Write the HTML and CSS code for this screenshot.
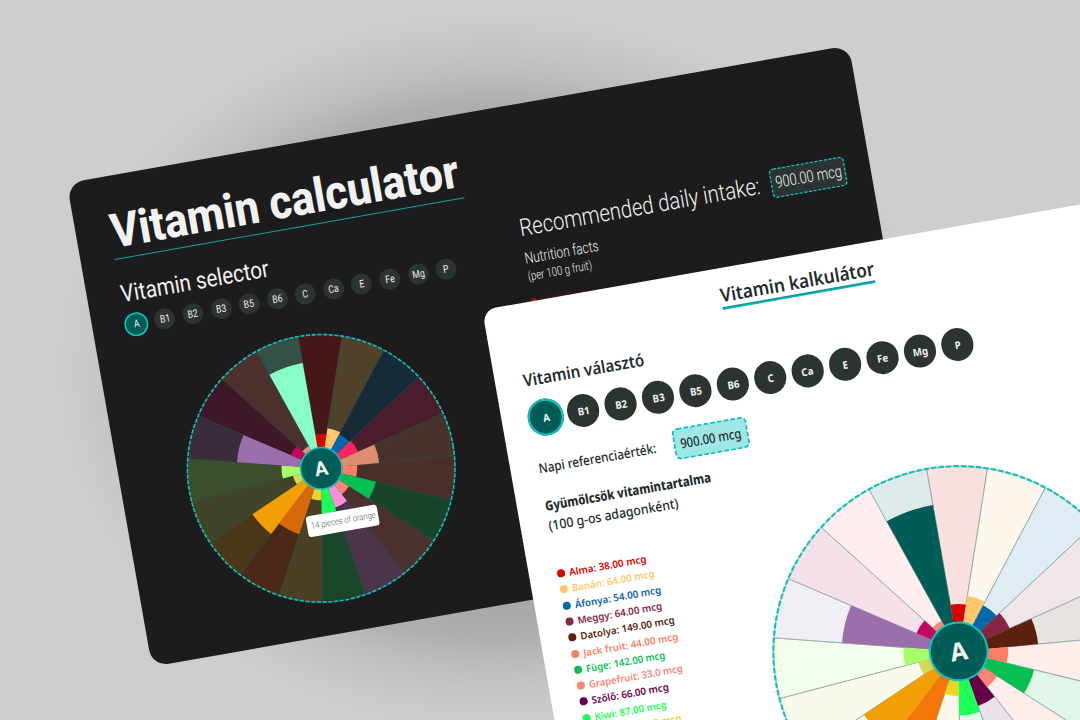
FILE: index.html
```html
<!DOCTYPE html>
<html lang="hu">
<head>
<meta charset="utf-8">
<title>Vitamin calculator</title>
<link rel="stylesheet" href="styles.css">
</head>
<body>
<div class="stage">
  <section class="window dark">
    <div class="col-main">
      <h1 class="title"><span data-width="353">Vitamin calculator</span></h1>
      <h2 class="subtitle"><span data-width="150">Vitamin selector</span></h2>
      <div class="picker"></div>
      <div class="wheel-wrap">
        <svg class="wheel" viewBox="-136 -136 272 272" data-theme="dark"></svg>
        <div class="tooltip"><span data-width="65">14 pieces of orange</span></div>
      </div>
    </div>
    <div class="col-facts">
      <div class="intake">
        <span class="intake-label"><span data-width="244">Recommended daily intake:</span></span>
        <span class="pill"><svg class="pill-frame"><rect x="0.7" y="0.7" width="74.8" height="28.6" rx="4"/></svg><span class="pill-text" data-width="67">900.00 mcg</span></span>
      </div>
      <div class="facts"><span data-width="74.5">Nutrition facts</span></div>
      <div class="per"><span data-width="65">(per 100 g fruit)</span></div>
      <div class="fruit"><i></i><span data-width="46">Apple: 38.00 mcg</span></div>
    </div>
  </section>

  <section class="window light">
    <h1 class="title"><span data-width="156">Vitamin kalkulátor</span></h1>
    <h2 class="subtitle"><span data-width="123">Vitamin választó</span></h2>
    <div class="picker"></div>
    <div class="body">
      <div class="details">
        <div class="intake">
          <span class="intake-label"><span data-width="119.5">Napi referenciaérték:</span></span>
          <span class="pill"><svg class="pill-frame"><rect x="1" y="1" width="74" height="30" rx="5"/></svg><span class="pill-text" data-width="62">900.00 mcg</span></span>
        </div>
        <div class="facts"><span data-width="168.5">Gyümölcsök vitamintartalma</span></div>
        <div class="per"><span data-width="131.5">(100 g-os adagonként)</span></div>
        <ul class="list"></ul>
      </div>
      <svg class="wheel" viewBox="-188 -188 376 376" data-theme="light"></svg>
    </div>
  </section>
</div>
<script src="app.js"></script>
</body>
</html>
```
FILE: styles.css
```css
* { box-sizing: border-box; margin: 0; padding: 0; }

body {
  width: 1080px;
  height: 720px;
  overflow: hidden;
  background:
    radial-gradient(ellipse 440px 360px at 495px 370px,
      #8f8f8f 0%, #a3a3a3 60%, #afafaf 74%, #bcbcbc 82%, #c5c5c5 89%, #cbcbcb 95%, rgba(206, 206, 206, 0) 100%),
    #cecece;
}

.stage {
  position: relative;
  width: 0;
  height: 0;
  transform: rotate(-10deg);
  transform-origin: 0 0;
}

.window { position: absolute; }

h1, h2 { font-weight: inherit; }

[data-width] {
  display: inline-block;
  white-space: nowrap;
  transform-origin: 0 50%;
}

.picker { display: grid; align-items: center; justify-items: center; }
.picker span {
  display: flex;
  align-items: center;
  justify-content: center;
  border-radius: 50%;
  background: #2c3431;
  color: #f2f2f2;
}
.picker .active { background: #005c56; }

.pill { position: relative; flex: none; display: flex; align-items: center; }
.pill-frame { position: absolute; left: 0; top: 0; width: 100%; height: 100%; stroke: #10c2bd; }
.pill-text { position: relative; }
.wheel { display: block; flex: none; }
.hub-label { text-anchor: middle; fill: #f2f2f2; font-weight: 700; }
.intake { display: flex; align-items: center; }
.intake-label { flex: none; }

/* dark window */
.dark {
  left: 34px;
  top: 192px;
  width: 794px;
  height: 490.5px;
  border-radius: 17px;
  background: #1c1c1c;
  color: #f2f2f2;
  font-family: Roboto, sans-serif;
  display: flex;
  padding: 32.3px 0 0 30px;
}
.dark .col-main { width: 408px; }
.dark .title {
  width: 355px;
  height: 52px;
  margin-left: 4.1px;
  background: linear-gradient(#0fa5a1, #0fa5a1) 0 100% / 100% 1.7px no-repeat;
  font-size: 47.5px;
  line-height: 48px;
  font-weight: 800;
}
.dark .title span { padding-left: 1px; }
.dark .title span, .dark .subtitle span { vertical-align: top; }
.dark .subtitle {
  margin: 22.3px 0 0 4.4px;
  font-size: 24px;
  line-height: 24px;
  height: 24px;
  font-weight: 400;
}
.dark .picker {
  width: 343px;
  height: 24px;
  margin-top: 8.4px;
  grid-template-columns: repeat(12, 28.58px);
}
.dark .picker span { width: 21px; height: 21px; font-size: 10.5px; }
.dark .picker b { font-weight: 400; transform: scaleX(0.82); }
.dark .picker .active { width: 24px; height: 24px; box-shadow: inset 0 0 0 1.5px #10c2bd; }
.dark .wheel-wrap { position: relative; width: 272px; margin: 26.1px 0 0 35.4px; }
.dark .wheel { width: 272px; height: 272px; }
.dark .hub-label { font-size: 20px; }
.tooltip {
  position: absolute;
  left: 112px;
  top: 181.3px;
  width: 71.5px;
  height: 20.5px;
  padding-left: 3.5px;
  border-radius: 3px;
  background: #fff;
  color: #555;
  font-size: 9px;
  line-height: 20px;
  font-weight: 300;
}
.dark .col-facts { flex: none; width: 332px; padding-top: 75.5px; }
.dark .intake { width: 332px; height: 30px; }
.dark .intake-label { width: 255.4px; height: 24px; font-size: 24px; line-height: 24px; font-weight: 300; }
.dark .intake-label span { vertical-align: top; }
.dark .pill {
  width: 76.2px;
  height: 30px;
  padding-left: 4.6px;
  font-size: 16.5px;
  font-weight: 300;
}
.dark .pill-frame { fill: #2c3431; stroke-width: 1.4px; stroke-dasharray: 3.2 1.5; }
.dark .facts { margin-top: 8px; height: 16px; font-size: 15.5px; line-height: 16px; font-weight: 300; }
.dark .per { margin-top: 3.4px; height: 14px; font-size: 12.5px; line-height: 14px; font-weight: 300; }
.dark .fruit {
  display: flex;
  align-items: center;
  margin: 12.6px 0 0 -0.8px;
  height: 10px;
  font-size: 9px;
  line-height: 10px;
  color: #5e1714;
}
.dark .fruit i { width: 4.6px; height: 4.6px; margin-right: 3.6px; border-radius: 50%; background: #a01a08; }

/* light window */
.light {
  left: 421.2px;
  top: 389.4px;
  width: 800px;
  height: 620px;
  border-radius: 14px;
  background: #fff;
  color: #232b2b;
  font-family: "Noto Sans", sans-serif;
  padding: 16.7px 0 0 25px;
}
.light .title {
  width: 155.7px;
  height: 25.2px;
  margin-left: 211.5px;
  font-size: 19px;
  line-height: 20px;
  font-weight: 600;
  background: linear-gradient(#078b87, #10c5c2) 0 100% / 100% 2.8px no-repeat;
}
.light .title span, .light .subtitle span { vertical-align: top; }
.light .subtitle {
  margin: 25.6px 0 0 2.6px;
  height: 18px;
  font-size: 17px;
  line-height: 18px;
  font-weight: 600;
}
.light .picker {
  width: 456px;
  height: 36.4px;
  margin-top: 12.6px;
  grid-template-columns: repeat(12, 37.97px);
}
.light .picker span { width: 32.6px; height: 32.6px; font-size: 10.5px; }
.light .picker b { font-weight: 700; transform: scaleX(0.92); }
.light .picker .active { width: 36.6px; height: 36.6px; box-shadow: inset 0 0 0 2.2px #10c2bd; }
.light .body { display: flex; margin-left: 2.6px; }
.light .details { flex: none; width: 212.4px; padding-top: 15.2px; }
.light .intake { height: 32px; }
.light .intake-label { width: 136.9px; font-size: 13.5px; line-height: 16px; font-weight: 500; }
.light .pill {
  width: 76px;
  height: 32px;
  padding-left: 7px;
  font-size: 13.5px;
  font-weight: 500;
}
.light .pill-frame { fill: #9fe7e5; stroke-width: 1.9px; stroke-dasharray: 4.6 2.2; }
.light .facts { margin-top: 14px; height: 16px; font-size: 13.5px; line-height: 16px; font-weight: 800; }
.light .per { margin-top: 4px; height: 16px; font-size: 13.5px; line-height: 16px; font-weight: 500; }
.light .list { list-style: none; margin: 33px 0 0 0.6px; }
.light .list li {
  display: flex;
  align-items: center;
  height: 16.29px;
  color: var(--c);
  font-size: 10px;
  line-height: 12px;
  font-weight: 600;
}
.light .list i { width: 8px; height: 8px; margin-right: 3.8px; border-radius: 50%; background: var(--c); }
.light .wheel { width: 376px; height: 376px; margin: 96.3px 0 0 -18.3px; }
.light .hub-label { font-size: 25px; }
```
FILE: app.js
```js
const vitamins = ["A", "B1", "B2", "B3", "B5", "B6", "C", "Ca", "E", "Fe", "Mg", "P"];

document.querySelectorAll(".picker").forEach((picker) => {
  picker.innerHTML = vitamins
    .map((v, i) => `<span${i === 0 ? ' class="active"' : ""}><b>${v}</b></span>`)
    .join("");
});

const fruits = [
  ["Alma: 38.00 mcg", "#dc0000", 78],
  ["Banán: 64.00 mcg", "#ffc76c", 84.3],
  ["Áfonya: 54.00 mcg", "#0467a8", 87.7],
  ["Meggy: 64.00 mcg", "#862643", 86],
  ["Datolya: 149.00 mcg", "#5b200e", 95.8],
  ["Jack fruit: 44.00 mcg", "#ff7f66", 96.1],
  ["Füge: 142.00 mcg", "#08bf54", 80.2],
  ["Grapefruit: 33.0 mcg", "#f88677", 94.8],
  ["Szőlő: 66.00 mcg", "#660048", 78.2],
  ["Kiwi: 87.00 mcg", "#1cff5a", 73.1],
  ["Citrom: 22.00 mcg", "#ecd22c", 85.6],
];
document.querySelector(".list").innerHTML = fruits
  .map(([t, c, w]) => `<li style="--c:${c}"><i></i><span data-width="${w}">${t}</span></li>`)
  .join("");

document.querySelectorAll("[data-width]").forEach((el) => {
  el.style.transform = `scaleX(${Number(el.dataset.width) / el.offsetWidth})`;
});

const themes = {
  dark: {
    radius: 133.8, hub: 20.7, ring: 1.5, rim: 1.6, dash: "4.1 1.6", line: "#2c5350", lineWidth: 0.5, labelY: 7,
    values: [34.3, 40.7, 38.6, 40.3, 58.2, 36, 56.3, 33, 41.6, 45.3, 32, 69.4, 82.6, 29.3, 39.7, 84.5, 33, 25.5, 107],
    fills: ["#dc0000", "#ffc76c", "#0467a8", "#ff2461", "#dd8e70", "#ff7f66", "#08bf54", "#f88677", "#fa90da", "#1cff5a",
      "#e5d628", "#d7690a", "#f19f05", "#d1d855", "#a8ff6c", "#9b6fab", "#c2085f", "#f78777", "#89ffc8"],
    tints: ["#451717", "#4f4229", "#162a38", "#4b1c2a", "#46322b", "#4b2d29", "#184429", "#4b312e", "#4c3548", "#19462a",
      "#4a4024", "#4a2a16", "#4c3618", "#414429", "#3c4e2c", "#3a2c3a", "#3e172a", "#4c302d", "#355044"],
  },
  light: {
    radius: 185.3, hub: 28.9, ring: 2, rim: 2.2, dash: "5.4 2.1", line: "#8ba8a6", lineWidth: 0.8, labelY: 9,
    values: [47.3, 56.3, 52.2, 56.1, 79.7, 49.5, 77.6, 45.7, 57.8, 64, 44.5, 96, 113.8, 41.8, 55.3, 117, 46, 35.4, 148.7],
    fills: ["#dc0000", "#ffc76c", "#0467a8", "#862643", "#5b200e", "#ff7f66", "#08bf54", "#f88677", "#660048", "#1cff5a",
      "#e5d628", "#f47608", "#f19f05", "#d1d855", "#a8ff6c", "#9b6fab", "#c2085f", "#f78777", "#005c56"],
    tints: ["#fae0df", "#fdf8eb", "#e0ecf4", "#f0e5e8", "#e9e3df", "#ffeeea", "#e1f7e9", "#ffedec", "#ebe1e8", "#e1ffe9",
      "#fcf8e8", "#fdeee0", "#fdf3e0", "#f9fae9", "#f4ffec", "#f2eef6", "#f6e1ea", "#ffeeed", "#dfebea"],
  },
};

const step = (Math.PI * 2) / 19;
const point = (r, a) => `${(r * Math.sin(a)).toFixed(2)} ${(-r * Math.cos(a)).toFixed(2)}`;
const sector = (r, i) => `M0 0L${point(r, i * step)}A${r} ${r} 0 0 1 ${point(r, (i + 1) * step)}Z`;

document.querySelectorAll(".wheel").forEach((svg) => {
  const t = themes[svg.dataset.theme];
  let out = "";
  t.tints.forEach((c, i) => {
    out += `<path d="${sector(t.radius, i)}" fill="${c}" stroke="${t.line}" stroke-width="${t.lineWidth}"/>`;
  });
  t.fills.forEach((c, i) => { out += `<path d="${sector(t.values[i], i)}" fill="${c}"/>`; });
  out += `<circle r="${t.radius}" fill="none" stroke="#10c2bd" stroke-width="${t.rim}" stroke-dasharray="${t.dash}"/>`;
  out += `<circle r="${t.hub}" fill="#005c56" stroke="#10c2bd" stroke-width="${t.ring}"/>`;
  out += `<text class="hub-label" y="${t.labelY}">A</text>`;
  svg.innerHTML = out;
});
```
